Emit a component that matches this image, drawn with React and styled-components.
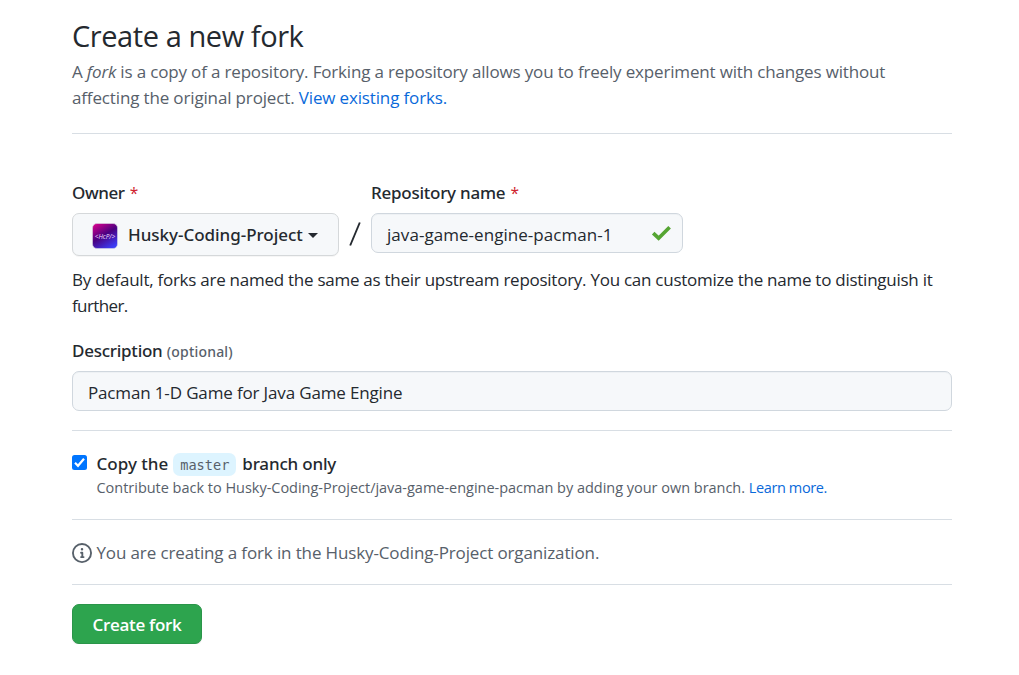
import React from 'react';
import styled, { createGlobalStyle } from 'styled-components';

const GlobalStyle = createGlobalStyle`
  * { box-sizing: border-box; }
  body { margin: 0; background: #fff; }
`;

const Page = styled.main`
  width: 880px;
  margin-left: 72px;
  padding-top: 13px;
  color: #24292f;
  font: 400 17px/26px "Open Sans", sans-serif;
  white-space: nowrap;
`;

const Title = styled.h1`
  margin: 0 0 1px;
  font-size: 29px;
  font-weight: 400;
  line-height: 45px;
  letter-spacing: -0.43px;
`;

const Line = styled.div`
  letter-spacing: ${(p) => p.$spacing || 0}px;
`;

const Lead = styled.div`
  color: #57606a;
`;

const Link = styled.a`
  color: #0969da;
  text-decoration: none;
  letter-spacing: ${(p) => (p.$spacing === undefined ? 'inherit' : `${p.$spacing}px`)};
`;

const Divider = styled.hr`
  height: 1px;
  margin: ${(p) => p.$top}px 0 ${(p) => p.$bottom}px;
  border: 0;
  background: #d8dee4;
`;

const Fields = styled.div`
  display: flex;
  align-items: flex-start;
  height: 87px;
`;

const Field = styled.div`
  display: flex;
  flex-direction: column;
  gap: 7px;
  width: ${(p) => p.$width}px;
`;

const Label = styled.label`
  height: 26px;
  font-family: "Noto Sans", sans-serif;
  font-weight: 500;
  letter-spacing: ${(p) => p.$spacing || 0}px;
`;

const Required = styled.span`
  margin-left: 1px;
  color: #cf222e;
  font: 400 15.5px/20px "Open Sans", sans-serif;
`;

const Optional = styled.span`
  color: #57606a;
  font-size: 14px;
  line-height: 20px;
  letter-spacing: 0.2px;
`;

const OwnerButton = styled.button`
  display: flex;
  align-items: center;
  height: 43px;
  padding: 0 19px;
  border: 1px solid #d5d8da;
  border-radius: 7px;
  background: #f6f8fa;
  box-shadow: 0 1px 0 rgba(27, 31, 36, 0.04);
  color: #24292f;
  font: 500 17px/26px "Noto Sans", sans-serif;
  letter-spacing: -0.03px;
`;

const Avatar = styled.svg`
  margin: 3px 10px 0 0;
  flex: none;
  overflow: visible;
`;

const Caret = styled.span`
  margin: 2px 0 0 5px;
  border: 5px solid transparent;
  border-top-color: #24292f;
  border-bottom: 0;
`;

const Slash = styled.span`
  width: 32px;
  padding-top: 42px;
  display: flex;
  justify-content: center;
`;

const InputBox = styled.div`
  display: flex;
  align-items: center;
  justify-content: space-between;
  height: 40px;
  padding: 3px 10px 0 15px;
  border: 1px solid #d0d7de;
  border-radius: 7px;
  background: #f6f8fa;
  box-shadow: inset 0 1px 0 rgba(208, 215, 222, 0.2);
  letter-spacing: ${(p) => p.$spacing || 0}px;
`;

const Note = styled.div`
  margin-bottom: 19px;
`;

const Option = styled.div`
  display: flex;
  gap: 9.5px;
`;

const CheckBox = styled.span`
  display: flex;
  width: 15px;
  height: 15px;
  margin-top: 4px;
  border-radius: 2.5px;
  background: #0075ff;
`;

const OptionTitle = styled.div`
  display: flex;
  align-items: center;
`;

const Branch = styled.code`
  height: 23px;
  margin: 1px 6px 0 5px;
  padding: 0 7px;
  border-radius: 7px;
  background: #ddf4ff;
  color: #57606a;
  font: 400 13.6px/25px "DejaVu Sans Mono", monospace;
`;

const OptionHelp = styled.div`
  color: #57606a;
  font-size: 14.5px;
  line-height: 22px;
  letter-spacing: -0.02px;
`;

const Info = styled.div`
  display: flex;
  align-items: center;
  gap: 4.5px;
  color: #57606a;
  letter-spacing: -0.13px;
`;

const SubmitButton = styled.button`
  display: flex;
  align-items: center;
  justify-content: center;
  width: 130px;
  height: 40px;
  padding: 1px 0 0;
  border: 1px solid #2a9549;
  border-radius: 7px;
  background: #2da44e;
  box-shadow: 0 1px 0 rgba(27, 31, 36, 0.1);
  color: #fff;
  font: 600 17px/26px "Open Sans", sans-serif;
  letter-spacing: -0.3px;
`;

function OwnerAvatar() {
  return (
    <Avatar width="26" height="26" viewBox="0 0 26 26">
      <defs>
        <linearGradient id="avatar" x1="0.1" y1="0" x2="0.7" y2="1">
          <stop offset="0" stopColor="#d8008c" />
          <stop offset="0.5" stopColor="#4a0080" />
          <stop offset="1" stopColor="#3c3cf5" />
        </linearGradient>
      </defs>
      <rect x="0.5" y="0.5" width="25" height="25" rx="4.5" fill="url(#avatar)" stroke="#d9d9e4" strokeOpacity="0.6" />
      <text x="13" y="15.5" textAnchor="middle" fill="#f0dcff" fontFamily="Open Sans" fontStyle="italic" fontSize="6.5">
        {'<HcP/>'}
      </text>
    </Avatar>
  );
}

export default function App() {
  return (
    <>
      <GlobalStyle />
      <Page>
        <Title>Create a new fork</Title>
        <Lead>
          <Line $spacing={-0.165}>
            A <em>fork</em> is a copy of a repository. Forking a repository allows you to freely experiment with changes without
          </Line>
          <Line $spacing={-0.149}>
            affecting the original project. <Link href="#">View existing forks.</Link>
          </Line>
        </Lead>
        <Divider $top={22} $bottom={46} />

        <Fields>
          <Field $width={267}>
            <Label $spacing={-0.4}>Owner <Required>*</Required></Label>
            <OwnerButton>
              <OwnerAvatar />
              Husky-Coding-Project
              <Caret />
            </OwnerButton>
          </Field>
          <Slash>
            <svg width="12" height="24" viewBox="0 0 12 24">
              <path d="M10.8 0.5 1.2 23.5" stroke="#24292f" strokeWidth="1.9" />
            </svg>
          </Slash>
          <Field $width={312}>
            <Label $spacing={-0.25}>Repository name <Required>*</Required></Label>
            <InputBox $spacing={0.05}>
              java-game-engine-pacman-1
              <svg width="21" height="20" viewBox="0 0 21 20">
                <path d="M2.2 8.2 7.6 13.2 18.6 2.2" fill="none" stroke="#55a532" strokeWidth="3.7" />
              </svg>
            </InputBox>
          </Field>
        </Fields>

        <Note>
          <Line $spacing={-0.26}>
            By default, forks are named the same as their upstream repository. You can customize the name to distinguish it
          </Line>
          <Line $spacing={-0.6}>further.</Line>
        </Note>

        <Field $width={880}>
          <Label $spacing={-0.25}>Description <Optional>(optional)</Optional></Label>
          <InputBox $spacing={-0.15}>Pacman 1-D Game for Java Game Engine</InputBox>
        </Field>
        <Divider $top={19} $bottom={20} />

        <Option>
          <CheckBox>
            <svg width="15" height="15" viewBox="0 0 15 15">
              <path d="M3 7.8 6 10.8 12 3.8" fill="none" stroke="#fff" strokeWidth="2.2" />
            </svg>
          </CheckBox>
          <div>
            <OptionTitle>
              <Label>Copy the</Label>
              <Branch>master</Branch>
              <Label $spacing={-0.18}>branch only</Label>
            </OptionTitle>
            <OptionHelp>
              Contribute back to Husky-Coding-Project/java-game-engine-pacman by adding your own branch.{' '}
              <Link href="#" $spacing={-0.38}>Learn more.</Link>
            </OptionHelp>
          </div>
        </Option>
        <Divider $top={20} $bottom={20} />

        <Info>
          <svg width="20" height="20" viewBox="0 0 16 16" fill="#57606a">
            <path d="M0 8a8 8 0 1 1 16 0A8 8 0 0 1 0 8Zm8-6.5a6.5 6.5 0 1 0 0 13 6.5 6.5 0 0 0 0-13ZM6.5 7.75A.75.75 0 0 1 7.25 7h1a.75.75 0 0 1 .75.75v2.75h.25a.75.75 0 0 1 0 1.5h-2a.75.75 0 0 1 0-1.5h.25v-2h-.25a.75.75 0 0 1-.75-.75ZM8 6a1 1 0 1 1 0-2 1 1 0 0 1 0 2Z" />
          </svg>
          You are creating a fork in the Husky-Coding-Project organization.
        </Info>
        <Divider $top={18} $bottom={19} />

        <SubmitButton>Create fork</SubmitButton>
      </Page>
    </>
  );
}
